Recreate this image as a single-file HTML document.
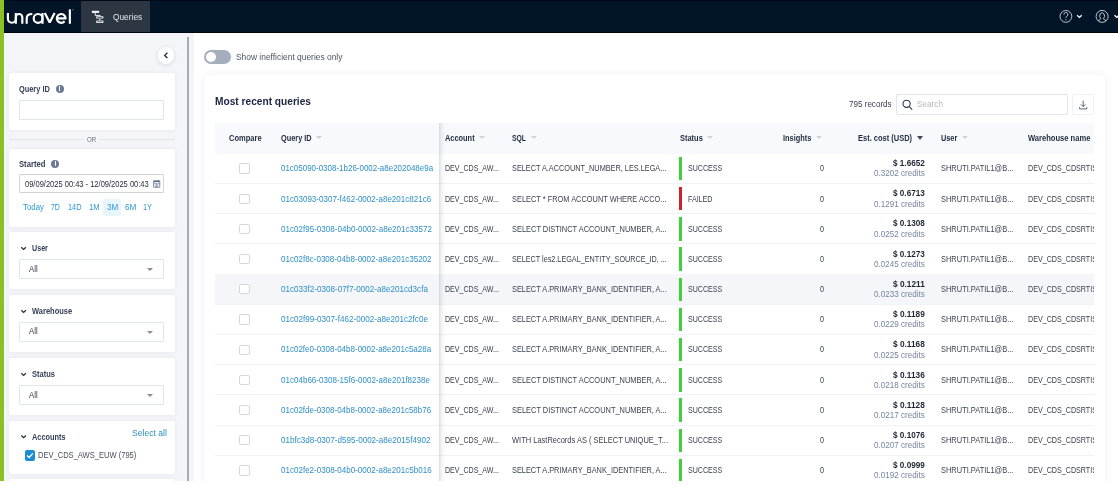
<!DOCTYPE html>
<html><head><meta charset="utf-8"><title>Queries</title>
<style>
*{box-sizing:border-box;margin:0;padding:0}
html,body{width:1118px;height:486px;overflow:hidden;background:#fff;font-family:"Liberation Sans",sans-serif}
#app{position:absolute;left:0;top:0;width:1118px;height:480.5px;overflow:hidden;background:#fff}
.a{position:absolute}
.t{position:absolute;white-space:nowrap;line-height:1;transform-origin:0 0}
#top{position:absolute;left:0;top:0;width:1118px;height:33px;background:#021428;border-top:1px solid #010a16;border-bottom:1px solid #00060d}
#tab{position:absolute;left:80.9px;top:0.9px;width:69.1px;height:30.8px;background:#2d3744}
#green{position:absolute;left:0;top:0;width:3.9px;height:480.5px;background:#8cc126}
#side{position:absolute;left:3.9px;top:32.8px;width:189.8px;height:448px;background:#f4f5f9}
#divider{position:absolute;left:187px;top:37px;width:2.4px;height:444px;background:#a8adb8}
.panel{position:absolute;left:8.6px;width:166px;background:#fff;border-radius:2.5px;box-shadow:0 0 4px rgba(30,40,70,.07)}
.inp{position:absolute;left:19.2px;width:144.6px;border:1px solid #e1e5ed;border-radius:1px;background:#fff}
.caret{position:absolute;left:146.5px;width:0;height:0;border-left:3.1px solid transparent;border-right:3.1px solid transparent;border-top:3.4px solid #878c95}
.info{position:absolute;width:7.8px;height:7.8px;border-radius:50%;background:#6c7a96}
.info:before{content:"";position:absolute;left:3.3px;top:3.3px;width:1.3px;height:2.9px;background:#fff}
.info:after{content:"";position:absolute;left:3.3px;top:1.6px;width:1.3px;height:1.2px;background:#fff}
.orl{position:absolute;top:139.4px;height:1px;background:#e2e4e9}
#card{position:absolute;left:203.8px;top:75px;width:901px;height:420px;background:#fff;border-radius:3px;box-shadow:0 0 9px rgba(30,40,70,.075)}
#thead{position:absolute;left:215px;top:122.5px;width:879px;height:31px;background:#f8f9fc}
.hc{position:absolute;top:136.3px;width:0;height:0;border-left:3.2px solid transparent;border-right:3.2px solid transparent;border-top:3.6px solid #cdd1d8}
.hc.on{border-top-color:#3b475c;top:136px;border-left-width:3.6px;border-right-width:3.6px;border-top-width:4px}
.sep{position:absolute;left:215px;width:879px;height:1px;background:#f1f2f5}
.hl{position:absolute;left:215px;width:879px;height:30.2px;background:#f5f6f9}
.bar{position:absolute;left:679.2px;width:2.7px;height:23.4px}
.cb{position:absolute;left:239px;width:10.6px;height:10.4px;border:1px solid #d4d7dc;border-radius:2px;background:#fff}
#txt{position:absolute;left:0;top:0;width:1118px;height:481px;will-change:transform}
#freeze{position:absolute;left:438.6px;top:122.5px;width:6px;height:360px;background:linear-gradient(90deg,rgba(60,70,90,.19),rgba(60,70,90,.07) 35%,rgba(60,70,90,0))}
#clipR{position:absolute;left:1094px;top:116px;width:10.5px;height:370px;background:#fff}
</style></head><body>
<div id="app">
<div id="top"></div>
<div id="tab"></div>
<svg class="a" style="left:0;top:0" width="80" height="33" viewBox="0 0 80 33" fill="none" stroke="#fff" stroke-width="2.15" stroke-linejoin="round">
 <path d="M7.9 13V18.8A3.97 3.97 0 0 0 15.85 18.8V13"/>
 <path d="M15.85 23.8V17.2A3.22 3.22 0 0 1 22.3 17.2V23.8"/>
 <path d="M26.7 23.8V18.4Q26.7 14 32.3 14"/>
 <circle cx="38.1" cy="18.4" r="4.4"/>
 <path d="M42.5 13V23.8"/>
 <path d="M44.8 13L49.7 22.5L54.6 13" stroke-width="2.2" stroke-linejoin="bevel"/>
 <path d="M64.6 21.2A4.4 4.4 0 1 1 65.6 18.4H57"/>
 <path d="M69.85 9.4V23.8"/>
 <circle cx="73" cy="9.8" r="0.4" stroke-width="0.6" stroke="#8a93a0"/>
</svg>
<!-- queries icon -->
<svg class="a" style="left:90px;top:9px" width="16" height="16" viewBox="90 9 16 16" fill="#eceef0">
 <rect x="91.9" y="10.8" width="7.2" height="2.1" rx=".5"/>
 <rect x="96.2" y="16.3" width="7.2" height="2.3" rx=".5"/>
 <rect x="96.2" y="20.6" width="7.2" height="2.3" rx=".5"/>
 <path d="M95.2 12.9V15.4H100.2V16.4" stroke="#eceef0" stroke-width="1" fill="none"/>
 <path d="M99.8 18.6V20.6" stroke="#eceef0" stroke-width="1" fill="none"/>
 <rect x="97.3" y="17.1" width="5" height=".7" fill="#2d3744"/>
 <rect x="97.3" y="21.4" width="5" height=".7" fill="#2d3744"/>
</svg>
<!-- help + user -->
<svg class="a" style="left:1055px;top:6px" width="63" height="22" viewBox="1055 6 63 22" fill="none" stroke="#d3d7dc">
 <circle cx="1065.9" cy="16.4" r="5.9" stroke-width="0.9"/>
 <path d="M1063.9 14.6A2 2 0 1 1 1066.9 16.2Q1065.9 16.8 1065.9 17.9" stroke-width="0.9"/>
 <circle cx="1065.9" cy="19.6" r="0.55" fill="#d3d7dc" stroke="none"/>
 <path d="M1077.1 15.2L1079.4 17.4L1081.7 15.2" stroke="#fff" stroke-width="1.3"/>
 <circle cx="1102.1" cy="16.4" r="6" stroke-width="0.9"/>
 <path d="M1098.5 21.1Q1099.1 19.4 1100.9 18.7A2.4 3.2 0 1 1 1103.3 18.7Q1105.1 19.4 1105.7 21.1" stroke-width="0.9"/>
 <path d="M1114.5 15.2L1116.8 17.4L1119.1 15.2" stroke="#fff" stroke-width="1.3"/>
</svg>
<div id="side"></div>
<div id="green"></div>
<div id="divider"></div>
<!-- collapse button -->
<div class="a" style="left:157.8px;top:47px;width:16.6px;height:16.6px;border-radius:50%;background:#fff;box-shadow:0 1px 4px rgba(30,40,70,.14)"></div>
<svg class="a" style="left:160px;top:50px" width="12" height="12" viewBox="160 50 12 12" fill="none" stroke="#1b2440" stroke-width="1.3"><path d="M167.4 52.8L164.7 55.4L167.4 58"/></svg>
<!-- panels -->
<div class="panel" style="top:73.1px;height:57.3px"></div>
<div class="panel" style="top:148.6px;height:78.4px"></div>
<div class="panel" style="top:231.9px;height:57.3px"></div>
<div class="panel" style="top:294.9px;height:57.3px"></div>
<div class="panel" style="top:357.9px;height:57.3px"></div>
<div class="panel" style="top:421px;height:52.8px"></div>
<div class="panel" style="top:479.2px;height:20px"></div>
<div class="inp" style="top:99.6px;height:20.1px"></div>
<div class="inp" style="top:174.2px;height:18.8px;border-color:#d2d4d9"></div>
<div class="inp" style="top:258.6px;height:20.1px"></div>
<div class="inp" style="top:321.6px;height:20.1px"></div>
<div class="inp" style="top:384.6px;height:20.1px"></div>
<div class="caret" style="top:267.6px"></div>
<div class="caret" style="top:330.6px"></div>
<div class="caret" style="top:393.6px"></div>
<div class="info" style="left:55.9px;top:84.9px"></div>
<div class="info" style="left:51.4px;top:159.9px"></div>
<div class="orl" style="left:8.6px;width:75.6px"></div>
<div class="orl" style="left:99px;width:75.6px"></div>
<!-- 3M highlight -->
<div class="a" style="left:103.3px;top:198.7px;width:18.1px;height:17px;background:#e9f5fc;border-radius:3px"></div>
<!-- calendar icon -->
<svg class="a" style="left:152px;top:179px" width="10" height="10" viewBox="152 179 10 10" fill="none" stroke="#5f6d8a" stroke-width="0.8">
 <rect x="153.6" y="181" width="6.2" height="6.3" rx=".3"/><rect x="153.6" y="180.7" width="6.2" height="1.5" fill="#5f6d8a" stroke="none"/><path d="M155 180V181M158.4 180V181" stroke-width=".9"/><path d="M153.6 183.6H159.8M155 184.9H158.4M155 186.1H158.4M156.7 183.6V187.3" stroke-width=".5"/>
</svg>
<!-- sidebar chevrons -->
<svg class="a" style="left:20px;top:245px" width="8" height="200" viewBox="20 245 8 200" fill="none" stroke="#1f2a3c" stroke-width="1.2">
 <path d="M21.3 247.2L23.6 249.4L25.9 247.2"/><path d="M21.3 310.2L23.6 312.4L25.9 310.2"/><path d="M21.3 373.2L23.6 375.4L25.9 373.2"/><path d="M21.3 435.5L23.6 437.7L25.9 435.5"/>
</svg>
<!-- accounts checkbox -->
<div class="a" style="left:24.5px;top:450px;width:10.8px;height:10.8px;border-radius:2px;background:#1b8ed2"></div>
<svg class="a" style="left:24px;top:449px" width="12" height="12" viewBox="24 449 12 12" fill="none" stroke="#fff" stroke-width="1.4"><path d="M27 455.5L29.1 457.5L32.8 453.4"/></svg>
<!-- toggle -->
<div class="a" style="left:204.2px;top:49.8px;width:26.6px;height:13.8px;border-radius:7px;background:#a4aebd"></div>
<div class="a" style="left:205.7px;top:51.8px;width:10px;height:10px;border-radius:50%;background:#fff"></div>
<!-- card -->
<div id="card"></div>
<div class="a" style="left:896.4px;top:94.3px;width:171.2px;height:20.3px;border:1px solid #dfe5ef;border-radius:2px;background:#fff"></div>
<svg class="a" style="left:901px;top:98px" width="14" height="14" viewBox="901 98 14 14" fill="none" stroke="#2b3850" stroke-width="1.1"><circle cx="906.6" cy="103.8" r="3.6"/><path d="M909.2 106.6L912.2 109.6"/></svg>
<div class="a" style="left:1072.4px;top:94.3px;width:21.6px;height:20.3px;border:1px solid #f0f1f4;border-radius:2px;background:#fff"></div>
<svg class="a" style="left:1077px;top:99px" width="12" height="12" viewBox="1077 99 12 12" fill="none" stroke="#4a566a" stroke-width="0.9"><path d="M1083.2 100.6V106.6M1080.9 104.4L1083.2 106.7L1085.5 104.4M1079.6 107.2V108.9H1086.8V107.2"/></svg>
<div id="thead"></div>
<div class="hc" style="left:316px"></div>
<div class="hc" style="left:478.8px"></div>
<div class="hc" style="left:530.7px"></div>
<div class="hc" style="left:707px"></div>
<div class="hc" style="left:816px"></div>
<div class="hc on" style="left:916.6px"></div>
<div class="hc" style="left:962px"></div>
<div class="sep" style="top:183.00px"></div>
<div class="bar" style="top:156.80px;background:#3fd03a"></div>
<div class="cb" style="top:163.30px"></div>
<div class="sep" style="top:213.20px"></div>
<div class="bar" style="top:187.00px;background:#cf2228"></div>
<div class="cb" style="top:193.50px"></div>
<div class="sep" style="top:243.40px"></div>
<div class="bar" style="top:217.20px;background:#3fd03a"></div>
<div class="cb" style="top:223.70px"></div>
<div class="sep" style="top:273.60px"></div>
<div class="bar" style="top:247.40px;background:#3fd03a"></div>
<div class="cb" style="top:253.90px"></div>
<div class="hl" style="top:274.20px"></div>
<div class="sep" style="top:303.80px"></div>
<div class="bar" style="top:277.60px;background:#3fd03a"></div>
<div class="cb" style="top:284.10px"></div>
<div class="sep" style="top:334.00px"></div>
<div class="bar" style="top:307.80px;background:#3fd03a"></div>
<div class="cb" style="top:314.30px"></div>
<div class="sep" style="top:364.20px"></div>
<div class="bar" style="top:338.00px;background:#3fd03a"></div>
<div class="cb" style="top:344.50px"></div>
<div class="sep" style="top:394.40px"></div>
<div class="bar" style="top:368.20px;background:#3fd03a"></div>
<div class="cb" style="top:374.70px"></div>
<div class="sep" style="top:424.60px"></div>
<div class="bar" style="top:398.40px;background:#3fd03a"></div>
<div class="cb" style="top:404.90px"></div>
<div class="sep" style="top:454.80px"></div>
<div class="bar" style="top:428.60px;background:#3fd03a"></div>
<div class="cb" style="top:435.10px"></div>
<div class="sep" style="top:485.00px"></div>
<div class="bar" style="top:458.80px;background:#3fd03a"></div>
<div class="cb" style="top:465.30px"></div>
<div id="txt">
<span class="t" style="left:112.80px;top:13.00px;font-size:9.0px;font-weight:normal;color:#e6e8eb;transform:scaleX(0.9265)">Queries</span>
<span class="t" style="left:236.40px;top:53.00px;font-size:9.0px;font-weight:normal;color:#4b5563;transform:scaleX(0.9341)">Show inefficient queries only</span>
<span class="t" style="left:215.00px;top:96.00px;font-size:10.9px;font-weight:bold;color:#1b2440;transform:scaleX(0.9330)">Most recent queries</span>
<span class="t" style="left:848.50px;top:100.00px;font-size:8.6px;font-weight:normal;color:#3a4452;transform:scaleX(0.9385)">795 records</span>
<span class="t" style="left:917.40px;top:99.00px;font-size:9.4px;font-weight:normal;color:#b4b9c1;transform:scaleX(0.8749)">Search</span>
<span class="t" style="left:228.80px;top:135.00px;font-size:8.2px;font-weight:bold;color:#1f2a3c;transform:scaleX(0.9183)">Compare</span>
<span class="t" style="left:280.60px;top:135.00px;font-size:8.2px;font-weight:bold;color:#1f2a3c;transform:scaleX(0.8963)">Query ID</span>
<span class="t" style="left:445.00px;top:135.00px;font-size:8.2px;font-weight:bold;color:#1f2a3c;transform:scaleX(0.9038)">Account</span>
<span class="t" style="left:511.90px;top:135.00px;font-size:8.2px;font-weight:bold;color:#1f2a3c;transform:scaleX(0.8312)">SQL</span>
<span class="t" style="left:679.50px;top:135.00px;font-size:8.2px;font-weight:bold;color:#1f2a3c;transform:scaleX(0.9109)">Status</span>
<span class="t" style="left:783.40px;top:135.00px;font-size:8.2px;font-weight:bold;color:#1f2a3c;transform:scaleX(0.9015)">Insights</span>
<span class="t" style="left:858.30px;top:135.00px;font-size:8.2px;font-weight:bold;color:#1f2a3c;transform:scaleX(0.9148)">Est. cost (USD)</span>
<span class="t" style="left:940.70px;top:135.00px;font-size:8.2px;font-weight:bold;color:#1f2a3c;transform:scaleX(0.8947)">User</span>
<span class="t" style="left:1027.80px;top:135.00px;font-size:8.2px;font-weight:bold;color:#1f2a3c;transform:scaleX(0.9244)">Warehouse name</span>
<span class="t" style="left:280.60px;top:165.00px;font-size:8.2px;font-weight:normal;color:#2e8fc6;transform:scaleX(0.9739)">01c05090-0308-1b26-0002-a8e202048e9a</span>
<span class="t" style="left:445.00px;top:165.00px;font-size:8.2px;font-weight:normal;color:#39424f;transform:scaleX(0.8624)">DEV_CDS_AW...</span>
<span class="t" style="left:511.90px;top:165.00px;font-size:8.2px;font-weight:normal;color:#39424f;transform:scaleX(0.8932)">SELECT A.ACCOUNT_NUMBER, LES.LEGA...</span>
<span class="t" style="left:687.50px;top:165.00px;font-size:8.2px;font-weight:normal;color:#39424f;transform:scaleX(0.8663)">SUCCESS</span>
<span class="t" style="left:819.50px;top:165.00px;font-size:8.2px;font-weight:normal;color:#39424f;transform:scaleX(0.8767)">0</span>
<span class="t" style="left:892.60px;top:159.00px;font-size:8.3px;font-weight:bold;color:#1d2633;transform:scaleX(0.9846)">$ 1.6652</span>
<span class="t" style="left:873.60px;top:170.00px;font-size:8.2px;font-weight:normal;color:#7685a0;transform:scaleX(0.9876)">0.3202 credits</span>
<span class="t" style="left:940.90px;top:165.00px;font-size:8.2px;font-weight:normal;color:#39424f;transform:scaleX(0.9114)">SHRUTI.PATIL1@B...</span>
<span class="t" style="left:1027.80px;top:165.00px;font-size:8.2px;font-weight:normal;color:#39424f;transform:scaleX(0.8731)">DEV_CDS_CDSRTIS</span>
<span class="t" style="left:280.60px;top:196.00px;font-size:8.2px;font-weight:normal;color:#2e8fc6;transform:scaleX(0.9819)">01c03093-0307-f462-0002-a8e201c821c6</span>
<span class="t" style="left:445.00px;top:196.00px;font-size:8.2px;font-weight:normal;color:#39424f;transform:scaleX(0.8624)">DEV_CDS_AW...</span>
<span class="t" style="left:511.90px;top:196.00px;font-size:8.2px;font-weight:normal;color:#39424f;transform:scaleX(0.9048)">SELECT * FROM ACCOUNT WHERE ACCO...</span>
<span class="t" style="left:687.50px;top:196.00px;font-size:8.2px;font-weight:normal;color:#39424f;transform:scaleX(0.8647)">FAILED</span>
<span class="t" style="left:819.50px;top:196.00px;font-size:8.2px;font-weight:normal;color:#39424f;transform:scaleX(0.8767)">0</span>
<span class="t" style="left:892.60px;top:189.00px;font-size:8.3px;font-weight:bold;color:#1d2633;transform:scaleX(0.9846)">$ 0.6713</span>
<span class="t" style="left:873.60px;top:201.00px;font-size:8.2px;font-weight:normal;color:#7685a0;transform:scaleX(0.9876)">0.1291 credits</span>
<span class="t" style="left:940.90px;top:196.00px;font-size:8.2px;font-weight:normal;color:#39424f;transform:scaleX(0.9114)">SHRUTI.PATIL1@B...</span>
<span class="t" style="left:1027.80px;top:196.00px;font-size:8.2px;font-weight:normal;color:#39424f;transform:scaleX(0.8731)">DEV_CDS_CDSRTIS</span>
<span class="t" style="left:280.60px;top:226.00px;font-size:8.2px;font-weight:normal;color:#2e8fc6;transform:scaleX(0.9842)">01c02f95-0308-04b0-0002-a8e201c33572</span>
<span class="t" style="left:445.00px;top:226.00px;font-size:8.2px;font-weight:normal;color:#39424f;transform:scaleX(0.8624)">DEV_CDS_AW...</span>
<span class="t" style="left:511.90px;top:226.00px;font-size:8.2px;font-weight:normal;color:#39424f;transform:scaleX(0.9083)">SELECT DISTINCT ACCOUNT_NUMBER, A...</span>
<span class="t" style="left:687.50px;top:226.00px;font-size:8.2px;font-weight:normal;color:#39424f;transform:scaleX(0.8663)">SUCCESS</span>
<span class="t" style="left:819.50px;top:226.00px;font-size:8.2px;font-weight:normal;color:#39424f;transform:scaleX(0.8767)">0</span>
<span class="t" style="left:892.60px;top:219.00px;font-size:8.3px;font-weight:bold;color:#1d2633;transform:scaleX(0.9846)">$ 0.1308</span>
<span class="t" style="left:873.60px;top:231.00px;font-size:8.2px;font-weight:normal;color:#7685a0;transform:scaleX(0.9876)">0.0252 credits</span>
<span class="t" style="left:940.90px;top:226.00px;font-size:8.2px;font-weight:normal;color:#39424f;transform:scaleX(0.9114)">SHRUTI.PATIL1@B...</span>
<span class="t" style="left:1027.80px;top:226.00px;font-size:8.2px;font-weight:normal;color:#39424f;transform:scaleX(0.8731)">DEV_CDS_CDSRTIS</span>
<span class="t" style="left:280.60px;top:256.00px;font-size:8.2px;font-weight:normal;color:#2e8fc6;transform:scaleX(0.9845)">01c02f8c-0308-04b8-0002-a8e201c35202</span>
<span class="t" style="left:445.00px;top:256.00px;font-size:8.2px;font-weight:normal;color:#39424f;transform:scaleX(0.8624)">DEV_CDS_AW...</span>
<span class="t" style="left:511.90px;top:256.00px;font-size:8.2px;font-weight:normal;color:#39424f;transform:scaleX(0.8849)">SELECT les2.LEGAL_ENTITY_SOURCE_ID, ...</span>
<span class="t" style="left:687.50px;top:256.00px;font-size:8.2px;font-weight:normal;color:#39424f;transform:scaleX(0.8663)">SUCCESS</span>
<span class="t" style="left:819.50px;top:256.00px;font-size:8.2px;font-weight:normal;color:#39424f;transform:scaleX(0.8767)">0</span>
<span class="t" style="left:892.60px;top:250.00px;font-size:8.3px;font-weight:bold;color:#1d2633;transform:scaleX(0.9846)">$ 0.1273</span>
<span class="t" style="left:873.60px;top:261.00px;font-size:8.2px;font-weight:normal;color:#7685a0;transform:scaleX(0.9876)">0.0245 credits</span>
<span class="t" style="left:940.90px;top:256.00px;font-size:8.2px;font-weight:normal;color:#39424f;transform:scaleX(0.9114)">SHRUTI.PATIL1@B...</span>
<span class="t" style="left:1027.80px;top:256.00px;font-size:8.2px;font-weight:normal;color:#39424f;transform:scaleX(0.8731)">DEV_CDS_CDSRTIS</span>
<span class="t" style="left:280.60px;top:286.00px;font-size:8.2px;font-weight:normal;color:#2e8fc6;transform:scaleX(0.9899)">01c033f2-0308-07f7-0002-a8e201cd3cfa</span>
<span class="t" style="left:445.00px;top:286.00px;font-size:8.2px;font-weight:normal;color:#39424f;transform:scaleX(0.8624)">DEV_CDS_AW...</span>
<span class="t" style="left:511.90px;top:286.00px;font-size:8.2px;font-weight:normal;color:#39424f;transform:scaleX(0.9010)">SELECT A.PRIMARY_BANK_IDENTIFIER, A...</span>
<span class="t" style="left:687.50px;top:286.00px;font-size:8.2px;font-weight:normal;color:#39424f;transform:scaleX(0.8663)">SUCCESS</span>
<span class="t" style="left:819.50px;top:286.00px;font-size:8.2px;font-weight:normal;color:#39424f;transform:scaleX(0.8767)">0</span>
<span class="t" style="left:892.60px;top:280.00px;font-size:8.3px;font-weight:bold;color:#1d2633;transform:scaleX(0.9986)">$ 0.1211</span>
<span class="t" style="left:873.60px;top:291.00px;font-size:8.2px;font-weight:normal;color:#7685a0;transform:scaleX(0.9876)">0.0233 credits</span>
<span class="t" style="left:940.90px;top:286.00px;font-size:8.2px;font-weight:normal;color:#39424f;transform:scaleX(0.9114)">SHRUTI.PATIL1@B...</span>
<span class="t" style="left:1027.80px;top:286.00px;font-size:8.2px;font-weight:normal;color:#39424f;transform:scaleX(0.8731)">DEV_CDS_CDSRTIS</span>
<span class="t" style="left:280.60px;top:316.00px;font-size:8.2px;font-weight:normal;color:#2e8fc6;transform:scaleX(0.9899)">01c02f99-0307-f462-0002-a8e201c2fc0e</span>
<span class="t" style="left:445.00px;top:316.00px;font-size:8.2px;font-weight:normal;color:#39424f;transform:scaleX(0.8624)">DEV_CDS_AW...</span>
<span class="t" style="left:511.90px;top:316.00px;font-size:8.2px;font-weight:normal;color:#39424f;transform:scaleX(0.9010)">SELECT A.PRIMARY_BANK_IDENTIFIER, A...</span>
<span class="t" style="left:687.50px;top:316.00px;font-size:8.2px;font-weight:normal;color:#39424f;transform:scaleX(0.8663)">SUCCESS</span>
<span class="t" style="left:819.50px;top:316.00px;font-size:8.2px;font-weight:normal;color:#39424f;transform:scaleX(0.8767)">0</span>
<span class="t" style="left:892.60px;top:310.00px;font-size:8.3px;font-weight:bold;color:#1d2633;transform:scaleX(0.9986)">$ 0.1189</span>
<span class="t" style="left:873.60px;top:321.00px;font-size:8.2px;font-weight:normal;color:#7685a0;transform:scaleX(0.9876)">0.0229 credits</span>
<span class="t" style="left:940.90px;top:316.00px;font-size:8.2px;font-weight:normal;color:#39424f;transform:scaleX(0.9114)">SHRUTI.PATIL1@B...</span>
<span class="t" style="left:1027.80px;top:316.00px;font-size:8.2px;font-weight:normal;color:#39424f;transform:scaleX(0.8731)">DEV_CDS_CDSRTIS</span>
<span class="t" style="left:280.60px;top:346.00px;font-size:8.2px;font-weight:normal;color:#2e8fc6;transform:scaleX(0.9790)">01c02fe0-0308-04b8-0002-a8e201c5a28a</span>
<span class="t" style="left:445.00px;top:346.00px;font-size:8.2px;font-weight:normal;color:#39424f;transform:scaleX(0.8624)">DEV_CDS_AW...</span>
<span class="t" style="left:511.90px;top:346.00px;font-size:8.2px;font-weight:normal;color:#39424f;transform:scaleX(0.9010)">SELECT A.PRIMARY_BANK_IDENTIFIER, A...</span>
<span class="t" style="left:687.50px;top:346.00px;font-size:8.2px;font-weight:normal;color:#39424f;transform:scaleX(0.8663)">SUCCESS</span>
<span class="t" style="left:819.50px;top:346.00px;font-size:8.2px;font-weight:normal;color:#39424f;transform:scaleX(0.8767)">0</span>
<span class="t" style="left:892.60px;top:340.00px;font-size:8.3px;font-weight:bold;color:#1d2633;transform:scaleX(0.9986)">$ 0.1168</span>
<span class="t" style="left:873.60px;top:352.00px;font-size:8.2px;font-weight:normal;color:#7685a0;transform:scaleX(0.9876)">0.0225 credits</span>
<span class="t" style="left:940.90px;top:346.00px;font-size:8.2px;font-weight:normal;color:#39424f;transform:scaleX(0.9114)">SHRUTI.PATIL1@B...</span>
<span class="t" style="left:1027.80px;top:346.00px;font-size:8.2px;font-weight:normal;color:#39424f;transform:scaleX(0.8731)">DEV_CDS_CDSRTIS</span>
<span class="t" style="left:280.60px;top:377.00px;font-size:8.2px;font-weight:normal;color:#2e8fc6;transform:scaleX(0.9828)">01c04b66-0308-15f6-0002-a8e201f8238e</span>
<span class="t" style="left:445.00px;top:377.00px;font-size:8.2px;font-weight:normal;color:#39424f;transform:scaleX(0.8624)">DEV_CDS_AW...</span>
<span class="t" style="left:511.90px;top:377.00px;font-size:8.2px;font-weight:normal;color:#39424f;transform:scaleX(0.9083)">SELECT DISTINCT ACCOUNT_NUMBER, A...</span>
<span class="t" style="left:687.50px;top:377.00px;font-size:8.2px;font-weight:normal;color:#39424f;transform:scaleX(0.8663)">SUCCESS</span>
<span class="t" style="left:819.50px;top:377.00px;font-size:8.2px;font-weight:normal;color:#39424f;transform:scaleX(0.8767)">0</span>
<span class="t" style="left:892.60px;top:371.00px;font-size:8.3px;font-weight:bold;color:#1d2633;transform:scaleX(0.9986)">$ 0.1136</span>
<span class="t" style="left:873.60px;top:382.00px;font-size:8.2px;font-weight:normal;color:#7685a0;transform:scaleX(0.9876)">0.0218 credits</span>
<span class="t" style="left:940.90px;top:377.00px;font-size:8.2px;font-weight:normal;color:#39424f;transform:scaleX(0.9114)">SHRUTI.PATIL1@B...</span>
<span class="t" style="left:1027.80px;top:377.00px;font-size:8.2px;font-weight:normal;color:#39424f;transform:scaleX(0.8731)">DEV_CDS_CDSRTIS</span>
<span class="t" style="left:280.60px;top:407.00px;font-size:8.2px;font-weight:normal;color:#2e8fc6;transform:scaleX(0.9790)">01c02fde-0308-04b8-0002-a8e201c58b76</span>
<span class="t" style="left:445.00px;top:407.00px;font-size:8.2px;font-weight:normal;color:#39424f;transform:scaleX(0.8624)">DEV_CDS_AW...</span>
<span class="t" style="left:511.90px;top:407.00px;font-size:8.2px;font-weight:normal;color:#39424f;transform:scaleX(0.9083)">SELECT DISTINCT ACCOUNT_NUMBER, A...</span>
<span class="t" style="left:687.50px;top:407.00px;font-size:8.2px;font-weight:normal;color:#39424f;transform:scaleX(0.8663)">SUCCESS</span>
<span class="t" style="left:819.50px;top:407.00px;font-size:8.2px;font-weight:normal;color:#39424f;transform:scaleX(0.8767)">0</span>
<span class="t" style="left:892.60px;top:401.00px;font-size:8.3px;font-weight:bold;color:#1d2633;transform:scaleX(0.9986)">$ 0.1128</span>
<span class="t" style="left:873.60px;top:412.00px;font-size:8.2px;font-weight:normal;color:#7685a0;transform:scaleX(0.9876)">0.0217 credits</span>
<span class="t" style="left:940.90px;top:407.00px;font-size:8.2px;font-weight:normal;color:#39424f;transform:scaleX(0.9114)">SHRUTI.PATIL1@B...</span>
<span class="t" style="left:1027.80px;top:407.00px;font-size:8.2px;font-weight:normal;color:#39424f;transform:scaleX(0.8731)">DEV_CDS_CDSRTIS</span>
<span class="t" style="left:280.60px;top:437.00px;font-size:8.2px;font-weight:normal;color:#2e8fc6;transform:scaleX(0.9854)">01bfc3d8-0307-d595-0002-a8e2015f4902</span>
<span class="t" style="left:445.00px;top:437.00px;font-size:8.2px;font-weight:normal;color:#39424f;transform:scaleX(0.8624)">DEV_CDS_AW...</span>
<span class="t" style="left:511.90px;top:437.00px;font-size:8.2px;font-weight:normal;color:#39424f;transform:scaleX(0.9151)">WITH LastRecords AS ( SELECT UNIQUE_T...</span>
<span class="t" style="left:687.50px;top:437.00px;font-size:8.2px;font-weight:normal;color:#39424f;transform:scaleX(0.8663)">SUCCESS</span>
<span class="t" style="left:819.50px;top:437.00px;font-size:8.2px;font-weight:normal;color:#39424f;transform:scaleX(0.8767)">0</span>
<span class="t" style="left:892.60px;top:431.00px;font-size:8.3px;font-weight:bold;color:#1d2633;transform:scaleX(0.9846)">$ 0.1076</span>
<span class="t" style="left:873.60px;top:442.00px;font-size:8.2px;font-weight:normal;color:#7685a0;transform:scaleX(0.9876)">0.0207 credits</span>
<span class="t" style="left:940.90px;top:437.00px;font-size:8.2px;font-weight:normal;color:#39424f;transform:scaleX(0.9114)">SHRUTI.PATIL1@B...</span>
<span class="t" style="left:1027.80px;top:437.00px;font-size:8.2px;font-weight:normal;color:#39424f;transform:scaleX(0.8731)">DEV_CDS_CDSRTIS</span>
<span class="t" style="left:280.60px;top:467.00px;font-size:8.2px;font-weight:normal;color:#2e8fc6;transform:scaleX(0.9816)">01c02fe2-0308-04b0-0002-a8e201c5b016</span>
<span class="t" style="left:445.00px;top:467.00px;font-size:8.2px;font-weight:normal;color:#39424f;transform:scaleX(0.8624)">DEV_CDS_AW...</span>
<span class="t" style="left:511.90px;top:467.00px;font-size:8.2px;font-weight:normal;color:#39424f;transform:scaleX(0.9010)">SELECT A.PRIMARY_BANK_IDENTIFIER, A...</span>
<span class="t" style="left:687.50px;top:467.00px;font-size:8.2px;font-weight:normal;color:#39424f;transform:scaleX(0.8663)">SUCCESS</span>
<span class="t" style="left:819.50px;top:467.00px;font-size:8.2px;font-weight:normal;color:#39424f;transform:scaleX(0.8767)">0</span>
<span class="t" style="left:892.60px;top:461.00px;font-size:8.3px;font-weight:bold;color:#1d2633;transform:scaleX(0.9846)">$ 0.0999</span>
<span class="t" style="left:873.60px;top:472.00px;font-size:8.2px;font-weight:normal;color:#7685a0;transform:scaleX(0.9876)">0.0192 credits</span>
<span class="t" style="left:940.90px;top:467.00px;font-size:8.2px;font-weight:normal;color:#39424f;transform:scaleX(0.9114)">SHRUTI.PATIL1@B...</span>
<span class="t" style="left:1027.80px;top:467.00px;font-size:8.2px;font-weight:normal;color:#39424f;transform:scaleX(0.8731)">DEV_CDS_CDSRTIS</span>
<span class="t" style="left:19.30px;top:85.00px;font-size:8.4px;font-weight:bold;color:#364157;transform:scaleX(0.8820)">Query ID</span>
<span class="t" style="left:86.80px;top:136.00px;font-size:7.6px;font-weight:normal;color:#6b7280;transform:scaleX(0.8165)">OR</span>
<span class="t" style="left:19.30px;top:160.00px;font-size:8.4px;font-weight:bold;color:#364157;transform:scaleX(0.9148)">Started</span>
<span class="t" style="left:25.40px;top:180.00px;font-size:8.4px;font-weight:normal;color:#262e3b;transform:scaleX(0.8973)">09/09/2025 00:43 - 12/09/2025 00:43</span>
<span class="t" style="left:22.90px;top:203.00px;font-size:8.6px;font-weight:normal;color:#2f99d4;transform:scaleX(0.9155)">Today</span>
<span class="t" style="left:51.40px;top:203.00px;font-size:8.6px;font-weight:normal;color:#2f99d4;transform:scaleX(0.8091)">7D</span>
<span class="t" style="left:67.70px;top:203.00px;font-size:8.6px;font-weight:normal;color:#2f99d4;transform:scaleX(0.8500)">14D</span>
<span class="t" style="left:89.00px;top:203.00px;font-size:8.6px;font-weight:normal;color:#2f99d4;transform:scaleX(0.8868)">1M</span>
<span class="t" style="left:106.90px;top:203.00px;font-size:8.6px;font-weight:normal;color:#2f99d4;transform:scaleX(0.9454)">3M</span>
<span class="t" style="left:125.00px;top:203.00px;font-size:8.6px;font-weight:normal;color:#2f99d4;transform:scaleX(0.9537)">6M</span>
<span class="t" style="left:143.20px;top:203.00px;font-size:8.6px;font-weight:normal;color:#2f99d4;transform:scaleX(0.8559)">1Y</span>
<span class="t" style="left:31.50px;top:244.00px;font-size:8.4px;font-weight:bold;color:#364157;transform:scaleX(0.8537)">User</span>
<span class="t" style="left:28.60px;top:265.00px;font-size:8.4px;font-weight:normal;color:#2f3845;transform:scaleX(0.9235)">All</span>
<span class="t" style="left:31.50px;top:307.00px;font-size:8.4px;font-weight:bold;color:#364157;transform:scaleX(0.8964)">Warehouse</span>
<span class="t" style="left:28.60px;top:327.00px;font-size:8.4px;font-weight:normal;color:#2f3845;transform:scaleX(0.9235)">All</span>
<span class="t" style="left:31.50px;top:370.00px;font-size:8.4px;font-weight:bold;color:#364157;transform:scaleX(0.8981)">Status</span>
<span class="t" style="left:28.60px;top:391.00px;font-size:8.4px;font-weight:normal;color:#2f3845;transform:scaleX(0.9235)">All</span>
<span class="t" style="left:31.50px;top:433.00px;font-size:8.4px;font-weight:bold;color:#364157;transform:scaleX(0.8776)">Accounts</span>
<span class="t" style="left:131.60px;top:428.00px;font-size:9.4px;font-weight:normal;color:#2e8fc6;transform:scaleX(0.9173)">Select all</span>
<span class="t" style="left:38.10px;top:451.00px;font-size:8.4px;font-weight:normal;color:#474f5c;transform:scaleX(0.9013)">DEV_CDS_AWS_EUW (795)</span>
</div>
<div id="freeze"></div>
<div id="clipR"></div>
</div>
</body></html>
